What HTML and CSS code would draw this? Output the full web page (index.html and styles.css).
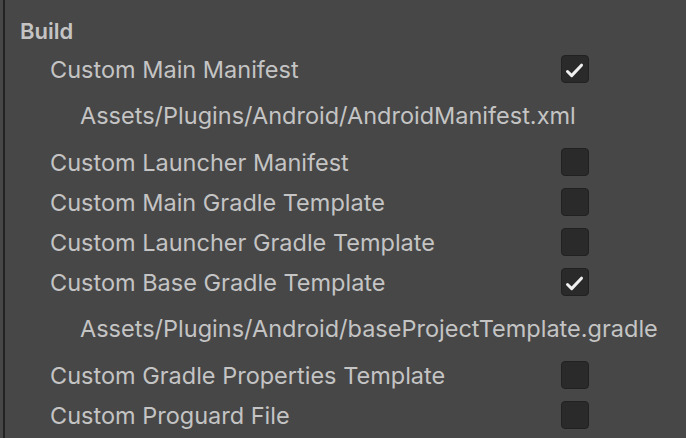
FILE: index.html
```html
<!DOCTYPE html>
<html lang="en">
<head>
<meta charset="UTF-8">
<meta name="viewport" content="width=device-width, initial-scale=1.0">
<title>Player Settings - Build</title>
<link rel="stylesheet" href="styles.css">
</head>

<body>
    <div class="panel">
        <div class="section-title">Build</div>

        <div class="row">
            <span class="label">Custom Main Manifest</span>
            <span class="toggle">
                <svg viewBox="0 0 28 28" width="28" height="28"><path d="M6.5 16.5 L10.7 20.6 L20.5 10.2" /></svg>
            </span>
        </div>
        <div class="path">Assets/Plugins/Android/AndroidManifest.xml</div>

        <div class="row">
            <span class="label">Custom Launcher Manifest</span>
            <span class="toggle"></span>
        </div>
        <div class="row">
            <span class="label">Custom Main Gradle Template</span>
            <span class="toggle"></span>
        </div>
        <div class="row">
            <span class="label">Custom Launcher Gradle Template</span>
            <span class="toggle"></span>
        </div>
        <div class="row">
            <span class="label">Custom Base Gradle Template</span>
            <span class="toggle">
                <svg viewBox="0 0 28 28" width="28" height="28"><path d="M6.5 16.5 L10.7 20.6 L20.5 10.2" /></svg>
            </span>
        </div>
        <div class="path">Assets/Plugins/Android/baseProjectTemplate.gradle</div>

        <div class="row">
            <span class="label">Custom Gradle Properties Template</span>
            <span class="toggle"></span>
        </div>
        <div class="row">
            <span class="label">Custom Proguard File</span>
            <span class="toggle"></span>
        </div>
    </div>
</body>
</html>
```

FILE: styles.css
```css
body {
    margin: 0;
    padding: 0;
    background-color: #474747;
    font-family: Inter, "Noto Sans", sans-serif;
    color: #c4c4c4;
    height: 438px;
    overflow: hidden;
}
.panel {
    margin-left: 3px;
    border-left: 2px solid #232323;
    height: 100%;
    padding-top: 13px;
    box-sizing: border-box;
    font-size: 23.5px;
}
.section-title {
    height: 36px;
    line-height: 36px;
    padding-left: 15px;
    font-weight: 600;
    font-size: 22px;
}
.row {
    display: flex;
    align-items: center;
    height: 40px;
    padding-left: 45px;
}
.label {
    width: 511px;
    flex-shrink: 0;
}
.path {
    height: 53px;
    line-height: 53px;
    padding-left: 75px;
    white-space: nowrap;
}
.toggle {
    width: 28px;
    height: 28px;
    box-sizing: border-box;
    border: 1px solid #212121;
    border-radius: 4px;
    background-color: #2a2a2a;
    flex-shrink: 0;
}
.toggle svg {
    display: block;
    margin: -1px;
}
.toggle svg path {
    fill: none;
    stroke: #f0f0f0;
    stroke-width: 3;
    stroke-linecap: round;
    stroke-linejoin: round;
}
```
